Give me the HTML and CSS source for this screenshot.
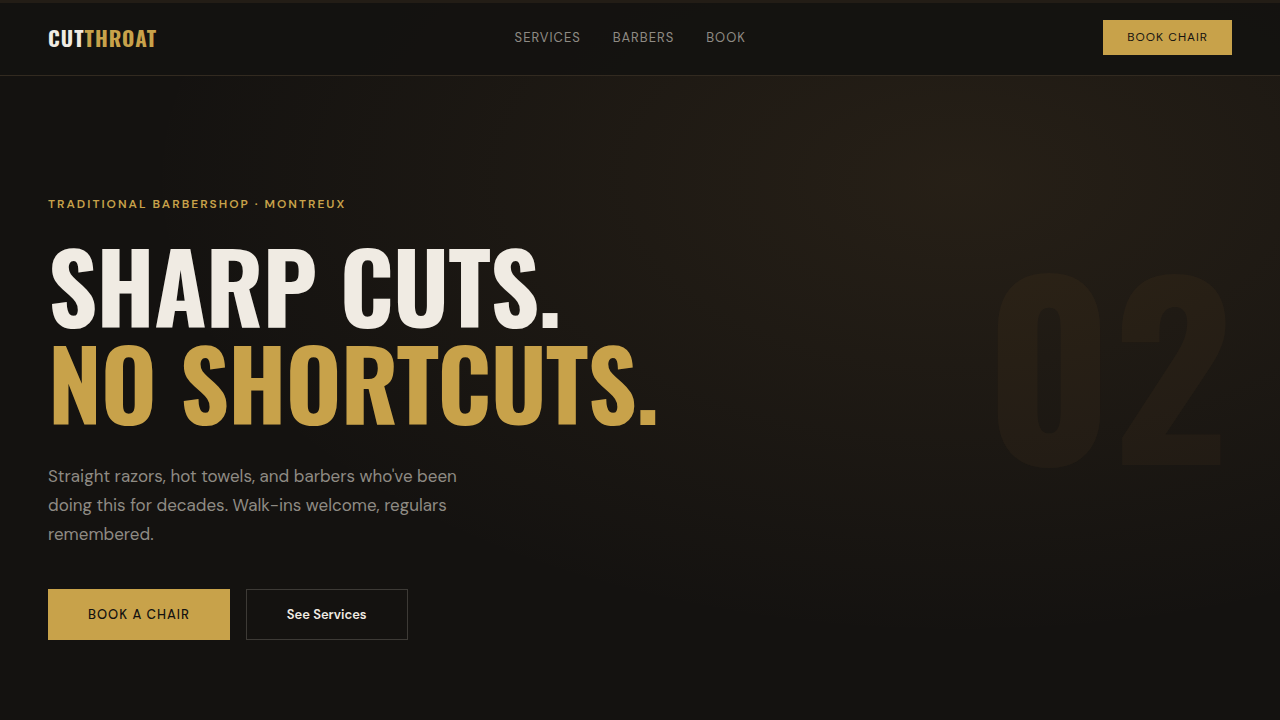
FILE: index.html
```
<!DOCTYPE html>
<html lang="en">
<head>
    <meta charset="UTF-8">
    <meta name="viewport" content="width=device-width, initial-scale=1.0">
    <title>Cutthroat</title>
    <link rel="stylesheet" href="styles.css">
</head>
<body>
    <div class="page">
        <header class="nav">
            <a class="logo" href="#">CUT<span>THROAT</span></a>
            <nav class="nav-links">
                <a href="#services">Services</a>
                <a href="#barbers">Barbers</a>
                <a href="#book">Book</a>
            </nav>
            <button class="btn btn-small" type="button">Book Chair</button>
        </header>

        <main class="hero">
            <span class="hero-number">02</span>
            <p class="eyebrow">Traditional Barbershop · Montreux</p>
            <h1>Sharp cuts.<br><span>No shortcuts.</span></h1>
            <p class="lead">Straight razors, hot towels, and barbers who've been doing this for decades. Walk-ins welcome, regulars remembered.</p>
            <div class="actions">
                <button class="btn" type="button">Book a Chair</button>
                <button class="btn-outline" type="button">See Services</button>
            </div>
        </main>
    </div>
</body>
</html>
```

FILE: styles.css
```
:root {
    --bg: #141210;
    --gold: #c8a24a;
    --cream: #f0ebe3;
    --muted: #8f8b84;
    --display: Oswald, "Roboto Condensed", "Liberation Sans Narrow", "Open Sans", sans-serif;
    --body: "DM Sans", Inter, sans-serif;
}

* {
    margin: 0;
    padding: 0;
    box-sizing: border-box;
}

body {
    background: var(--bg);
    color: var(--cream);
    font-family: var(--body);
}

.page {
    position: relative;
    display: flex;
    flex-direction: column;
    min-height: 100vh;
    background: radial-gradient(ellipse at 75% 25%, rgba(200, 150, 80, 0.1) 0%, transparent 60%);
}

/* Header */
.nav {
    display: flex;
    align-items: center;
    justify-content: space-between;
    padding: 17px 48px 20px;
    background: rgba(20, 18, 16, 0.92);
    border-top: 3px solid #231d16;
    border-bottom: 1px solid #322a20;
}

.logo {
    color: var(--cream);
    font-family: var(--display);
    font-size: 21px;
    font-weight: 700;
    letter-spacing: 1px;
    line-height: 35px;
    text-decoration: none;
}

.logo span {
    color: var(--gold);
}

.nav-links {
    display: flex;
    gap: 32px;
}

.nav-links a {
    color: var(--muted);
    font-size: 13px;
    letter-spacing: 1px;
    line-height: 16px;
    text-decoration: none;
    text-transform: uppercase;
}

.btn {
    padding: 0 40px;
    border: 0;
    background: var(--gold);
    color: var(--bg);
    font-family: var(--body);
    font-size: 13px;
    font-weight: 500;
    letter-spacing: 1px;
    line-height: 51px;
    text-transform: uppercase;
}

.btn-small {
    padding: 0 24px;
    font-size: 12px;
    font-weight: 400;
    line-height: 35px;
}

/* Hero */
.hero {
    flex: 1;
    display: flex;
    flex-direction: column;
    justify-content: center;
    padding: 120px 48px 80px;
}

.eyebrow {
    margin-bottom: 24px;
    color: var(--gold);
    font-size: 12px;
    font-weight: 600;
    letter-spacing: 2px;
    line-height: 16px;
    text-transform: uppercase;
}

h1 {
    margin-bottom: 32px;
    font-family: var(--display);
    font-size: 96px;
    font-weight: 700;
    letter-spacing: -1px;
    line-height: 97px;
    text-transform: uppercase;
}

h1 span {
    color: var(--gold);
}

.lead {
    max-width: 420px;
    margin-bottom: 40px;
    color: var(--muted);
    font-size: 17px;
    line-height: 29px;
}

.actions {
    display: flex;
    gap: 16px;
}

.btn-outline {
    padding: 0 40px;
    border: 1px solid #3d3a36;
    background: transparent;
    color: var(--cream);
    font-family: var(--body);
    font-size: 13px;
    font-weight: 600;
    line-height: 49px;
}

/* Oversized ghost numeral behind the hero */
.hero-number {
    position: absolute;
    top: 50%;
    right: 48px;
    transform: translateY(-50%);
    color: rgba(200, 140, 60, 0.05);
    font-family: var(--display);
    font-size: 232px;
    font-weight: 700;
    line-height: 1;
    pointer-events: none;
}
```
